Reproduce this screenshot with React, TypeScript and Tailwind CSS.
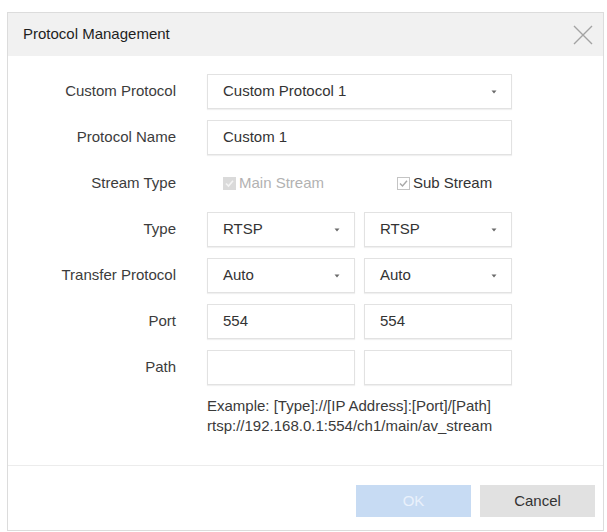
import React from "react";

const FONT = { fontFamily: '"Liberation Sans", Arial, sans-serif' };

function Arrow() {
  return (
    <svg width="6" height="4" viewBox="0 0 6 4" className="shrink-0">
      <path d="M0.5 0.5 L5.5 0.5 L3 3.5 Z" fill="#6b6b6b" />
    </svg>
  );
}

function Box({ value, select, className = "" }: { value?: string; select?: boolean; className?: string }) {
  return (
    <div
      className={`h-[35px] flex items-center justify-between pl-[15px] pr-[14px] bg-white border border-[#e2e2e2] shadow-[0_1px_1px_rgba(0,0,0,0.06)] text-[15px] text-[#333] ${className}`}
    >
      <span>{value}</span>
      {select && <Arrow />}
    </div>
  );
}

function Row({ label, children }: { label: string; children: React.ReactNode }) {
  return (
    <div className="flex items-center h-[35px]">
      <div className="w-[168px] text-right text-[15px] text-[#3c3c3c] shrink-0">{label}</div>
      <div className="ml-[31px] w-[305px] flex gap-[9px]">{children}</div>
    </div>
  );
}

function Check({ disabled }: { disabled?: boolean }) {
  return (
    <svg width="13" height="13" viewBox="0 0 13 13" className="shrink-0">
      {disabled ? (
        <>
          <rect x="0" y="0" width="13" height="13" fill="#dadada" />
          <path d="M3 6.5 L5.5 9 L10 3.8" stroke="#f4f4f4" strokeWidth="1.6" fill="none" />
        </>
      ) : (
        <>
          <rect x="0.5" y="0.5" width="12" height="12" fill="#fff" stroke="#c4c4c4" />
          <path d="M3 6.5 L5.5 9 L10 3.8" stroke="#a8a8a8" strokeWidth="1.4" fill="none" />
        </>
      )}
    </svg>
  );
}

export default function App() {
  return (
    <div className="w-[607px] h-[532px] bg-white pt-[12px] pl-[7px] pr-[3px] pb-[1px]" style={FONT}>
      <div className="h-full flex flex-col border border-[#dcdcdc] bg-white">
        <div className="h-[43px] shrink-0 bg-[#f1f1f1] flex items-center justify-between pl-[15px] pr-[10px]">
          <span className="text-[15px] text-[#1e1e1e]">Protocol Management</span>
          <svg width="20" height="20" viewBox="0 0 20 20">
            <path d="M1 1 L19 19 M19 1 L1 19" stroke="#a3a3a3" strokeWidth="1.4" />
          </svg>
        </div>

        <div className="flex-1 flex flex-col pt-[18px]">
          <div className="flex flex-col gap-[11px]">
            <Row label="Custom Protocol">
              <Box value="Custom Protocol 1" select className="flex-1" />
            </Row>
            <Row label="Protocol Name">
              <Box value="Custom 1" className="flex-1" />
            </Row>
            <Row label="Stream Type">
              <div className="w-[148px] flex items-center pl-[16px] gap-[3px] text-[15px] text-[#b2b2b2]">
                <Check disabled />
                <span>Main Stream</span>
              </div>
              <div className="flex-1 flex items-center pl-[33px] gap-[3px] text-[15px] text-[#333]">
                <Check />
                <span>Sub Stream</span>
              </div>
            </Row>
            <Row label="Type">
              <Box value="RTSP" select className="w-[148px]" />
              <Box value="RTSP" select className="flex-1" />
            </Row>
            <Row label="Transfer Protocol">
              <Box value="Auto" select className="w-[148px]" />
              <Box value="Auto" select className="flex-1" />
            </Row>
            <Row label="Port">
              <Box value="554" className="w-[148px]" />
              <Box value="554" className="flex-1" />
            </Row>
            <Row label="Path">
              <Box className="w-[148px]" />
              <Box className="flex-1" />
            </Row>
          </div>
          <div className="ml-[199px] mt-[11px] text-[15px] leading-[20px] text-[#3a3a3a]">
            <div>Example: [Type]://[IP Address]:[Port]/[Path]</div>
            <div>rtsp://192.168.0.1:554/ch1/main/av_stream</div>
          </div>
        </div>

        <div className="shrink-0 border-t border-[#ececec] flex justify-end gap-[9px] pt-[19px] pb-[13px] pr-[8px]">
          <button className="w-[115px] h-[32px] bg-[#c7dbf3] text-[15px] text-[#eaf1fb]">OK</button>
          <button className="w-[115px] h-[32px] bg-[#e1e1e1] text-[15px] text-[#333]">Cancel</button>
        </div>
      </div>
    </div>
  );
}
